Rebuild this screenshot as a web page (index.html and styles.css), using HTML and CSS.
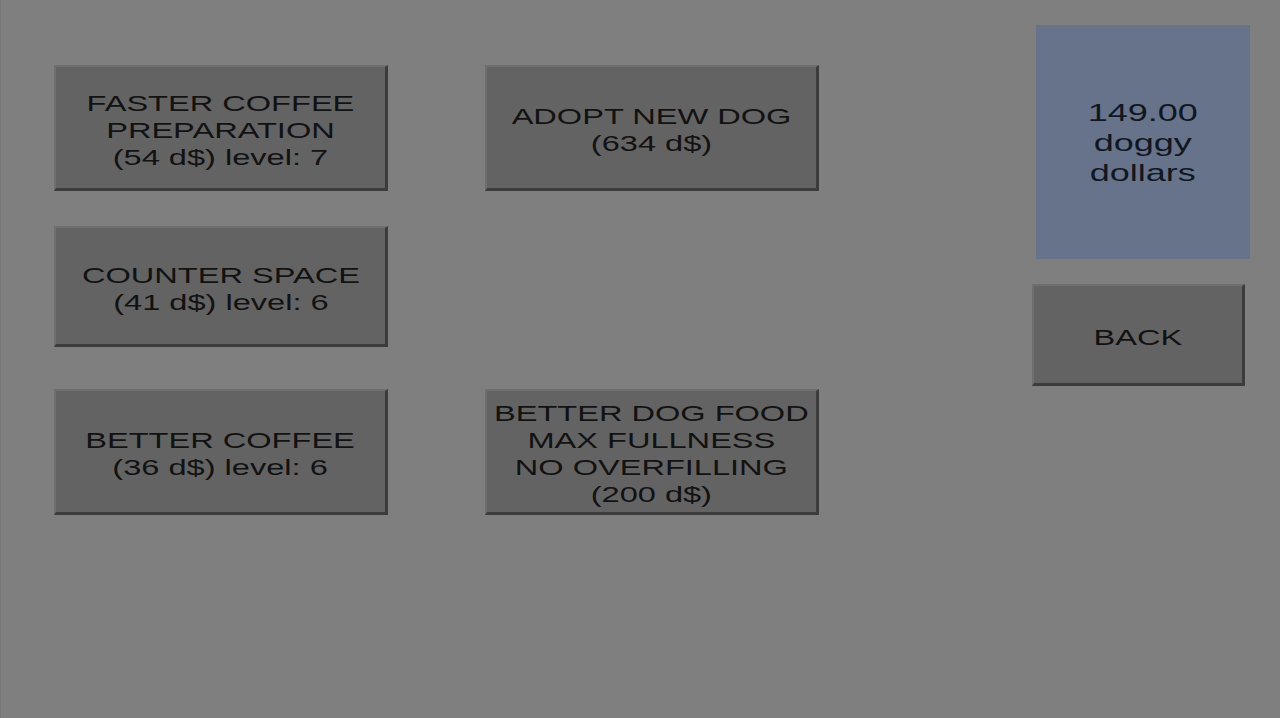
FILE: index.html
```html
<!DOCTYPE html>
<html lang="en">
<head>
<meta charset="utf-8">
<title>Shop</title>
<link rel="stylesheet" href="styles.css">
</head>
<body>
<div class="screen">
  <div class="upgrades">
    <button class="btn"><span class="label">FASTER COFFEE<br>PREPARATION<br>(54 d$) level: 7</span></button>
    <button class="btn"><span class="label">ADOPT NEW DOG<br>(634 d$)</span></button>
    <button class="btn short"><span class="label">COUNTER SPACE<br>(41 d$) level: 6</span></button>
    <div class="empty"></div>
    <button class="btn lower"><span class="label">BETTER COFFEE<br>(36 d$) level: 6</span></button>
    <button class="btn lower"><span class="label">BETTER DOG FOOD<br>MAX FULLNESS<br>NO OVERFILLING<br>(200 d$)</span></button>
  </div>
  <div class="side">
    <div class="wallet"><span class="money">149.00<br>doggy<br>dollars</span></div>
    <button class="btn back"><span class="label">BACK</span></button>
  </div>
</div>
</body>
</html>
```

FILE: styles.css
```css
html, body {
  margin: 0;
  padding: 0;
  height: 100%;
}

body {
  background: #7f7f7f;
  font-family: "Liberation Sans", Arial, sans-serif;
  overflow: hidden;
}

.screen {
  display: flex;
  height: 718px;
  border-left: 1px solid #777;
  box-sizing: border-box;
}

.upgrades {
  display: grid;
  grid-template-columns: 334px 334px;
  grid-template-rows: 126px 121px 126px;
  column-gap: 97px;
  row-gap: 35px;
  padding: 65px 0 0 53px;
  align-items: start;
}

/* bevelled game-style button */
.btn {
  box-sizing: border-box;
  width: 334px;
  height: 126px;
  margin: 0;
  padding: 5px 0 0 0;
  background: #646364;
  border-style: solid;
  border-width: 2px 3px 3px 2px;
  border-color: #6f6f6f #3c3c3c #3c3c3c #6f6f6f;
  display: flex;
  align-items: center;
  justify-content: center;
  font-family: inherit;
  cursor: pointer;
}

.btn.short {
  height: 121px;
}

.btn.lower {
  margin-top: 7px;
}

.label {
  display: inline-block;
  font-size: 22px;
  line-height: 27px;
  color: #121212;
  text-align: center;
  white-space: nowrap;
  transform: scaleX(1.48);
}

.side {
  margin-left: auto;
  padding: 25px 30px 0 0;
  display: flex;
  flex-direction: column;
  align-items: flex-start;
}

.wallet {
  box-sizing: border-box;
  width: 214px;
  height: 234px;
  margin-left: 4px;
  padding-top: 2px;
  background: #66738a;
  display: flex;
  align-items: center;
  justify-content: center;
}

.money {
  display: inline-block;
  font-size: 24px;
  line-height: 30px;
  color: #111722;
  text-align: center;
  transform: scaleX(1.5);
}

.btn.back {
  width: 213px;
  height: 102px;
  margin-top: 25px;
}
```
